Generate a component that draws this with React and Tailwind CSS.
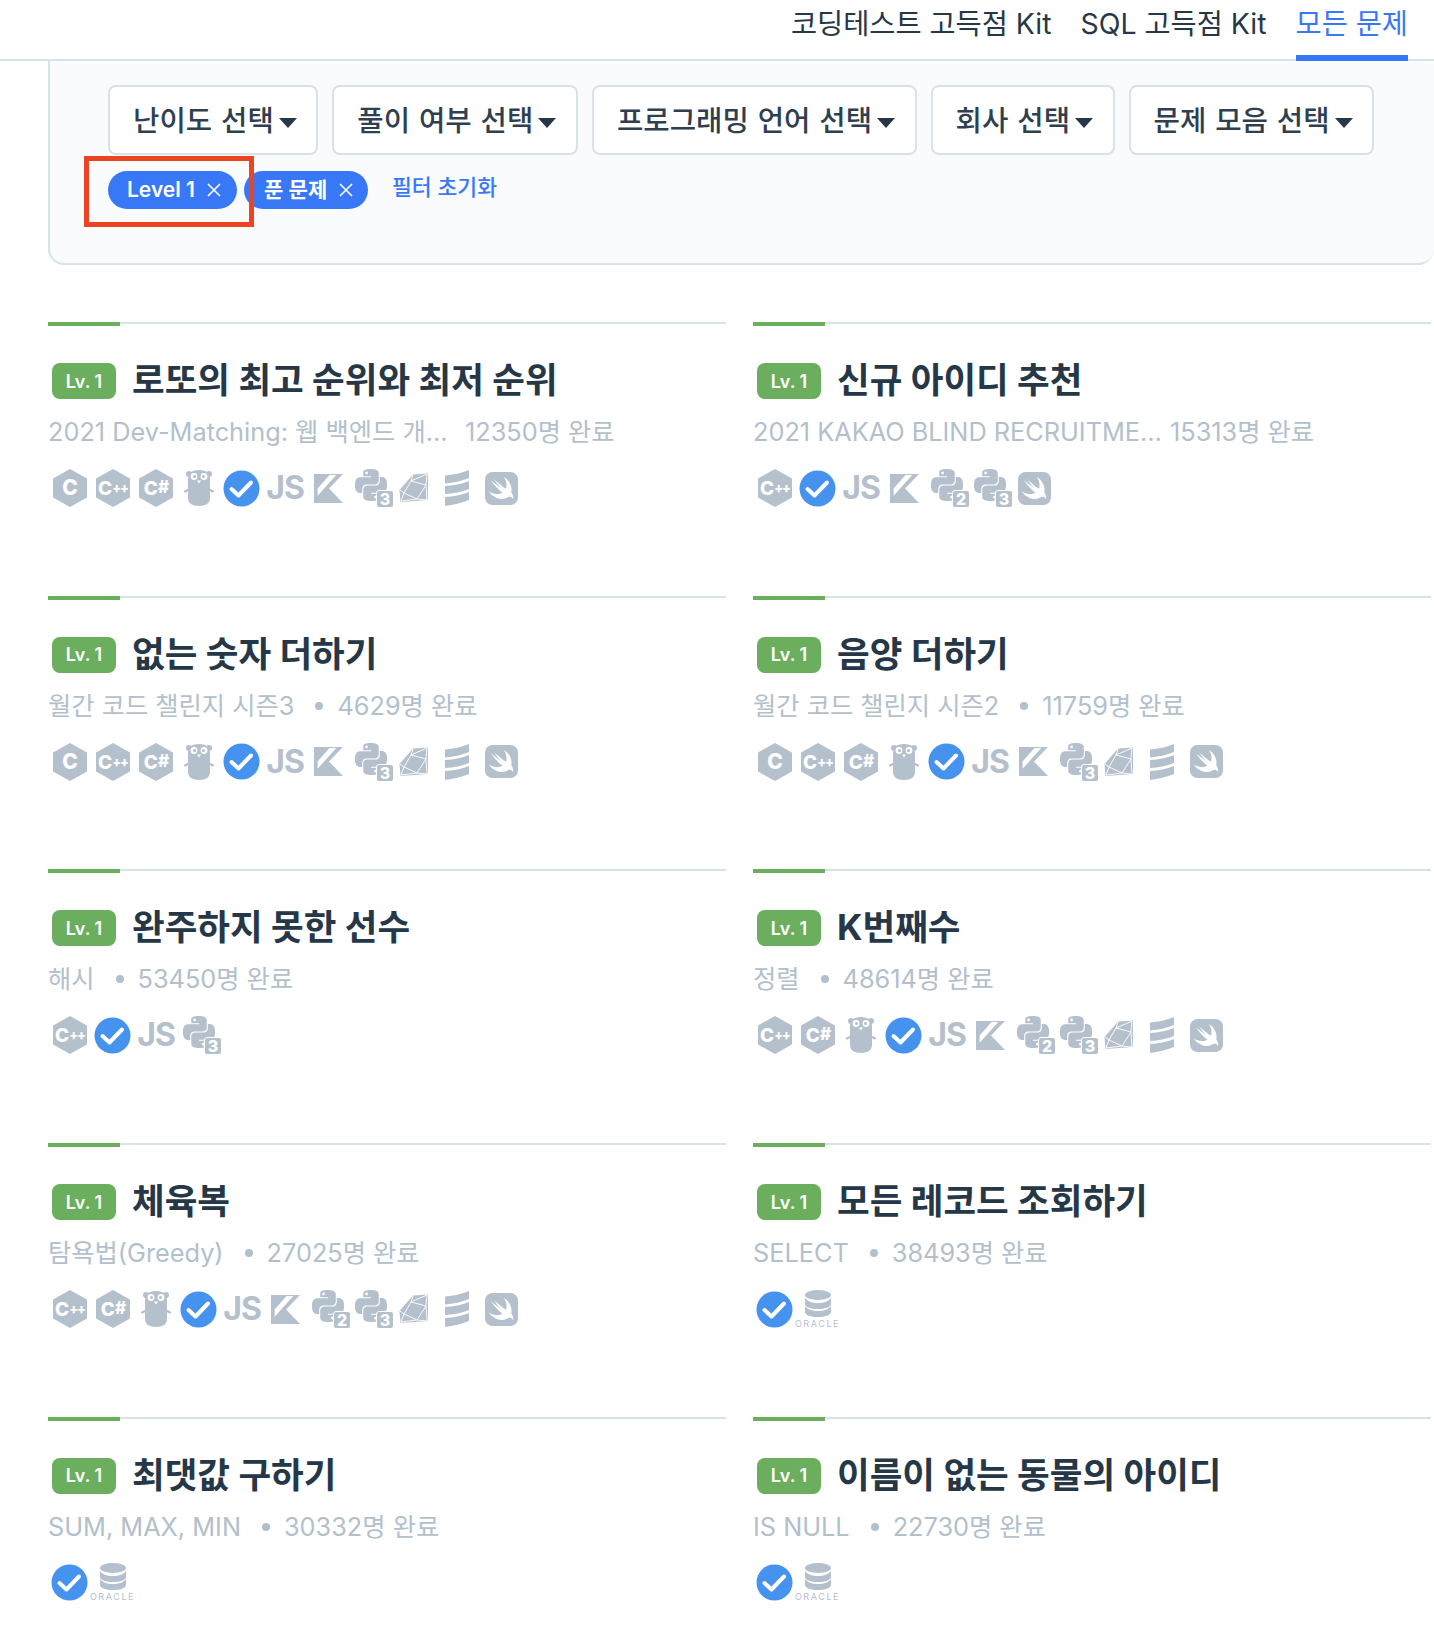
import React from "react";
import { SiSwift, SiPython } from "react-icons/si";

const GREY = "#b5c0cd";

function Hex({ label, size = 17, small = 13 }) {
  const head = label.slice(0, 1);
  const tail = label.slice(1);
  return (
    <svg width="36" height="38" viewBox="0 0 36 38">
      <polygon points="18,1 34,10 34,28 18,37 2,28 2,10" fill={GREY} stroke={GREY} strokeWidth="2" strokeLinejoin="round" />
      <text x="18" y="25.5" textAnchor="middle" fill="#fff" fontSize={size} fontWeight="800" fontFamily="Inter, sans-serif">
        {head}
        {tail && <tspan fontSize={small} dy="-1.5" letterSpacing="-1">{tail}</tspan>}
      </text>
    </svg>
  );
}

function Gopher() {
  return (
    <svg width="30" height="38" viewBox="0 0 30 38">
      <circle cx="5" cy="5" r="3" fill={GREY} />
      <circle cx="25" cy="5" r="3" fill={GREY} />
      <path d="M15 1c8 0 11 4 11 10v18c0 5-4 8-11 8S4 34 4 29V11C4 5 7 1 15 1z" fill={GREY} />
      <path d="M4 21l-3 1.500M26 21l3 1.500" stroke={GREY} strokeWidth="2" strokeLinecap="round" />
      <circle cx="10" cy="7.500" r="3.400" fill="#fff" />
      <circle cx="20" cy="7.500" r="3.400" fill="#fff" />
      <circle cx="10.500" cy="7.500" r="1.500" fill={GREY} />
      <circle cx="19.500" cy="7.500" r="1.500" fill={GREY} />
      <path d="M13 11.500h4l-2 3z" fill="#fff" />
    </svg>
  );
}

function Check() {
  return (
    <svg width="37" height="37" viewBox="0 0 37 37">
      <circle cx="18.500" cy="18.500" r="18" fill="#4593ee" />
      <path d="M8.500 19l7 6.500L28 12.500" fill="none" stroke="#fff" strokeWidth="4" strokeLinecap="round" strokeLinejoin="round" />
    </svg>
  );
}

function Js() {
  return <span className="text-[32px] ml-[1px] leading-none font-bold tracking-[-1px] text-[#b5c0cd]">JS</span>;
}

function Kotlin() {
  return (
    <svg width="29" height="29" viewBox="0 0 28 28" className="ml-[2px]">
      <path d="M0 0h28L14.500 14 28 28H0z" fill={GREY} />
      <path d="M15 1h6.500L3.500 21v-7z" fill="#fff" />
    </svg>
  );
}

function Python({ v }) {
  return (
    <span className="relative block w-[43px] h-[38px]">
      <SiPython size={32} color={GREY} className="absolute left-[6px] top-[0px]" />
      <span className="absolute -right-[2px] -bottom-[1px] w-[18px] h-[18px] rounded-[3px] bg-[#b5c0cd] border border-white flex items-center justify-center text-[16px] leading-none font-extrabold text-white">{v}</span>
    </span>
  );
}

function Ruby() {
  return (
    <svg width="30" height="30" viewBox="0 0 30 30">
      <path d="M14 1.500 29 0.500V27L1.500 29 0.500 17z" fill={GREY} />
      <path d="M14 2 12 8 27 12 18 26 5 20 12 8M27 12 28 1 12 8M18 26 28 27 27 12M5 20 2 28 18 26M5 20 1 17" fill="none" stroke="#fff" strokeWidth="0.9" />
    </svg>
  );
}

function Stack() {
  return (
    <svg width="26" height="38" viewBox="0 0 26 38">
      <path d="M1 6.500C9 6 18 4 25 1v8C18 12 9 14 1 14.500zM1 17C9 16.500 18 15 25 12v8C18 23 9 24.500 1 25zM1 28C9 27.500 18 26 25 23v8C18 34 9 36 1 37z" fill={GREY} />
    </svg>
  );
}

function Oracle() {
  return (
    <span className="flex flex-col items-center w-[43px]">
      <svg width="28" height="27" viewBox="0 0 28 27">
        <ellipse cx="14" cy="5" rx="13" ry="5" fill={GREY} />
        <path d="M1 8c2 3 7 5 13 5s11-2 13-5v6c0 3-6 5-13 5S1 17 1 14z" fill={GREY} />
        <path d="M1 16c2 3 7 5 13 5s11-2 13-5v6c0 3-6 5-13 5S1 25 1 22z" fill={GREY} />
      </svg>
      <span className="text-[9px] leading-[10px] mt-[2px] tracking-[1.6px] text-[#b5c0cd]">ORACLE</span>
    </span>
  );
}

const ICONS = {
  c: <Hex label="C" size={21} />,
  cpp: <Hex label="C++" size={19} small={13} />,
  cs: <Hex label="C#" size={19} small={17} />,
  go: <Gopher />,
  check: <Check />,
  js: <Js />,
  k: <Kotlin />,
  py2: <Python v="2" />,
  py3: <Python v="3" />,
  ruby: <Ruby />,
  scala: <Stack />,
  swift: <SiSwift size={33} color={GREY} className="ml-[3px]" />,
  oracle: <Oracle />,
};

const ALL = ["c", "cpp", "cs", "go", "check", "js", "k", "py3", "ruby", "scala", "swift"];
const NO_C = ["cpp", "cs", "go", "check", "js", "k", "py2", "py3", "ruby", "scala", "swift"];
const SQL = ["check", "oracle"];

const CARDS = [
  { title: "로또의 최고 순위와 최저 순위", cat: "2021 Dev-Matching: 웹 백엔드 개...", count: "12350명 완료", icons: ALL, cut: true },
  { title: "신규 아이디 추천", cat: "2021 KAKAO BLIND RECRUITME...", count: "15313명 완료", icons: ["cpp", "check", "js", "k", "py2", "py3", "swift"], cut: true },
  { title: "없는 숫자 더하기", cat: "월간 코드 챌린지 시즌3", count: "4629명 완료", icons: ALL },
  { title: "음양 더하기", cat: "월간 코드 챌린지 시즌2", count: "11759명 완료", icons: ALL },
  { title: "완주하지 못한 선수", cat: "해시", count: "53450명 완료", icons: ["cpp", "check", "js", "py3"] },
  { title: "K번째수", cat: "정렬", count: "48614명 완료", icons: NO_C },
  { title: "체육복", cat: "탐욕법(Greedy)", count: "27025명 완료", icons: NO_C },
  { title: "모든 레코드 조회하기", cat: "SELECT", count: "38493명 완료", icons: SQL },
  { title: "최댓값 구하기", cat: "SUM, MAX, MIN", count: "30332명 완료", icons: SQL },
  { title: "이름이 없는 동물의 아이디", cat: "IS NULL", count: "22730명 완료", icons: SQL },
];

const FILTERS = ["난이도 선택", "풀이 여부 선택", "프로그래밍 언어 선택", "회사 선택", "문제 모음 선택"];

function FilterButton({ label }) {
  return (
    <div className="h-[70px] pl-[23px] pr-[19.500px] pt-[1px] flex items-center gap-[5px] bg-white border-2 border-[#d7e2eb] rounded-[8px] text-[28.700px] [word-spacing:1.2px] font-medium text-[#2f3f50] whitespace-nowrap">
      <span>{label}</span>
      <svg width="18" height="10" viewBox="0 0 18 10" className="mt-[4px]"><path d="M0 0h18L9 10z" fill="#263747" /></svg>
    </div>
  );
}

function Tag({ label, className }) {
  return (
    <div className={"h-[38px] rounded-[19px] bg-[#3878f7] text-white flex items-center justify-between text-[21px] font-semibold whitespace-nowrap " + className}>
      <span>{label}</span>
      <svg width="14" height="14" viewBox="0 0 14 14"><path d="M1 1l12 12M13 1L1 13" stroke="#fff" strokeWidth="1.6" /></svg>
    </div>
  );
}

function Card({ c }) {
  return (
    <div className="h-[273.700px] border-t-2 border-[#d7e2eb]">
      <div className="w-[72px] h-[4px] -mt-[2px] bg-[#6bae5d]" />
      <div className="mt-[37px] pl-[4px] flex items-center gap-[16px]">
        <span className="w-[64px] h-[36px] rounded-[8px] bg-[#6bae5d] flex items-center justify-center text-white text-[18px] font-semibold">Lv. 1</span>
        <span className="text-[35.500px] leading-[36px] font-bold text-[#263747] whitespace-nowrap">{c.title}</span>
      </div>
      <div className="mt-[15px] h-[36px] flex items-center text-[25.300px] text-[#b2c0cc] whitespace-nowrap">
        {c.cut ? (
          <span className="w-[412px] shrink-0">{c.cat}</span>
        ) : (
          <span>{c.cat}</span>
        )}
        {c.cut ? (
          <span className="ml-[5px]">{c.count}</span>
        ) : (
          <>
            <span className="w-[8px] h-[8px] rounded-full bg-[#b2c0cc] ml-[21px] mr-[14px]" />
            <span>{c.count}</span>
          </>
        )}
      </div>
      <div className="mt-[18px] h-[40px] flex items-center">
        {c.icons.map((k, i) => (
          <span key={i} className="w-[43px] h-[40px] flex items-center justify-center shrink-0">{ICONS[k]}</span>
        ))}
      </div>
    </div>
  );
}

export default function App() {
  return (
    <div className="relative w-[1434px] h-[1627px] overflow-hidden bg-white font-['Inter','Noto_Sans_CJK_KR',sans-serif]">
      <header className="h-[61px] border-b-2 border-[#d7e2eb] flex justify-end pr-[26px] gap-[29px] text-[28.400px] text-[#263747]">
        <span className="h-[61px] pt-[3px]">코딩테스트 고득점 Kit</span>
        <span className="h-[61px] pt-[3px]">SQL 고득점 Kit</span>
        <span className="h-[61px] pt-[3px] text-[#3878f7] border-b-[6px] border-[#3878f7]">모든 문제</span>
      </header>

      <section className="ml-[48px] h-[204px] bg-[#fafbfd] border-2 border-t-0 border-r-0 border-[#d7e2eb] rounded-bl-[16px] rounded-br-[16px] pl-[58px] pt-[24px]">
        <div className="flex gap-[14px]">
          {FILTERS.map((f) => <FilterButton key={f} label={f} />)}
        </div>
        <div className="relative flex mt-[16px] gap-[7px] items-start">
          <Tag label="Level 1" className="w-[129px] pl-[19px] pr-[16px]" />
          <Tag label="푼 문제" className="w-[124px] pl-[20px] pr-[15px]" />
          <span className="ml-[17px] text-[21.600px] leading-[32px] font-medium text-[#3878f7]">필터 초기화</span>
          <div className="absolute -left-[24px] -top-[15px] w-[170px] h-[71px] border-[5px] border-[#ee4323]" />
        </div>
      </section>

      <main className="mt-[57px] ml-[48px] w-[1383px] grid grid-cols-[678px_678px] gap-x-[27px]">
        {CARDS.map((c) => <Card key={c.title} c={c} />)}
      </main>
    </div>
  );
}
